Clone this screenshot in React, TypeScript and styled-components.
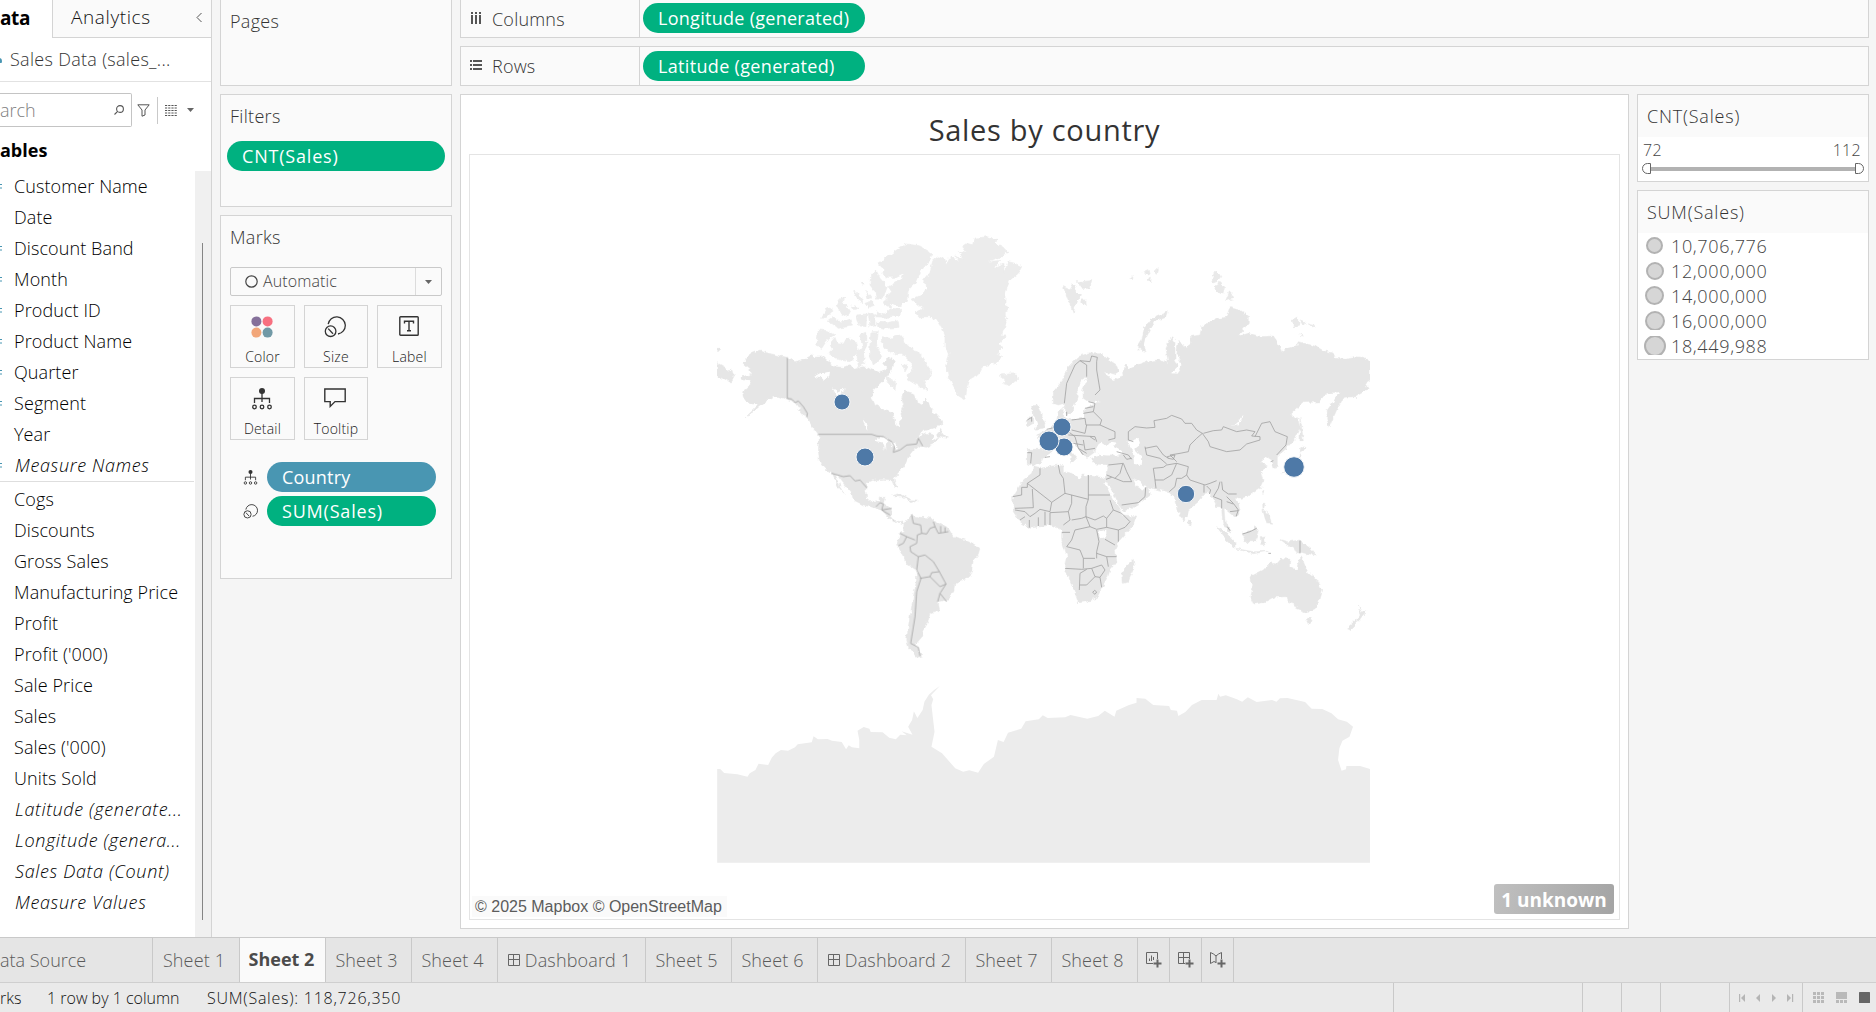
import React from "react";
import styled, { createGlobalStyle } from "styled-components";

const Global = createGlobalStyle`
  *, *::before, *::after { box-sizing: border-box; }
  body { margin: 0; overflow: hidden; background: #f5f5f5; }
`;

const Screen = styled.div`
  width: 1876px;
  height: 1012px;
  display: flex;
  flex-direction: column;
  overflow: hidden;
  background: #f5f5f5;
  color: #333;
  font-family: "Open Sans", "Noto Sans", sans-serif;
  font-size: 18px;
  font-weight: 350;
  line-height: 24px;
  white-space: nowrap;
`;

const Workspace = styled.div`
  display: flex;
  height: 937px;
`;

/* ---------- Data pane ---------- */

const DataPane = styled.aside`
  width: 212px;
  display: flex;
  flex-direction: column;
  background: #fff;
  border-right: 1px solid #d4d4d4;
`;

const PaneTabs = styled.div`
  display: flex;
  height: 38px;
`;

const PaneTabActive = styled.div`
  width: 52px;
  padding-top: 6px;
  font-size: 19px;
  font-weight: 700;
  color: #000;
  letter-spacing: -0.4px;
`;

const PaneTab = styled.div`
  flex: 1;
  display: flex;
  justify-content: space-between;
  padding: 5px 8px 0 18px;
  background: #fafafa;
  border-left: 1px solid #d4d4d4;
  border-bottom: 1px solid #d4d4d4;
  font-size: 19px;
  letter-spacing: 0.6px;
  color: #111;
`;

const SourceRow = styled.div`
  display: flex;
  align-items: center;
  gap: 7px;
  height: 44px;
  padding-bottom: 1px;
  border-bottom: 1px solid #e2e2e2;
  color: #333;
  letter-spacing: 0.3px;
`;

const SearchRow = styled.div`
  display: flex;
  align-items: center;
  height: 56px;
`;

const SearchBox = styled.div`
  display: flex;
  align-items: center;
  justify-content: space-between;
  width: 132px;
  height: 34px;
  padding-right: 7px;
  border: 1px solid #c4c4c4;
  border-left: 0;
  border-radius: 0 2px 2px 0;
  color: #808080;
`;

const SearchTools = styled.div`
  display: flex;
  align-items: center;
  padding-left: 5px;
`;

const ToolDivider = styled.span`
  width: 1px;
  height: 27px;
  margin: 0 7px;
  background: #c9c9c9;
`;

const ListToggle = styled.span`
  display: flex;
  align-items: center;
  gap: 10px;
`;

const TablesHeading = styled.div`
  height: 33px;
  color: #000;
  font-weight: 700;
`;

const FieldArea = styled.div`
  flex: 1;
  display: flex;
  justify-content: space-between;
`;

const FieldColumn = styled.div`
  width: 194px;
`;

const FieldGroup = styled.div<{ $divided?: boolean }>`
  border-top: ${(p) => (p.$divided ? "1px solid #dedede" : "0")};
  padding-top: ${(p) => (p.$divided ? "2px" : "0")};
`;

const FieldRow = styled.div<{ $italic?: boolean }>`
  display: flex;
  align-items: center;
  gap: ${(p) => (p.$italic ? 12 : 11)}px;
  height: 31px;
  padding-bottom: 2px;
  color: #000;
  font-style: ${(p) => (p.$italic ? "italic" : "normal")};
  letter-spacing: ${(p) => (p.$italic ? "0.65px" : "0.1px")};
`;

const ScrollGutter = styled.div`
  width: 16px;
  padding: 72px 0 17px 7px;
  background: #f0f0f0;
`;

const ScrollThumb = styled.div`
  width: 1px;
  height: 100%;
  background: #858585;
`;

/* ---------- Cards ---------- */

const CardColumn = styled.div`
  display: flex;
  flex-direction: column;
  gap: 8px;
  width: 232px;
  margin-left: 8px;
`;

const Card = styled.section<{ $h: number; $cut?: boolean }>`
  display: flex;
  flex-direction: column;
  height: ${(p) => p.$h}px;
  background: #fafafa;
  border: 1px solid #d4d4d4;
  border-top-width: ${(p) => (p.$cut ? 0 : 1)}px;
`;

const CardTitle = styled.div<{ $wide?: boolean }>`
  height: 42px;
  padding: 9px 0 0 9px;
  color: #333;
  letter-spacing: ${(p) => (p.$wide ? "0.8px" : "0.3px")};
`;

const Pill = styled.div<{ $w: number; $blue?: boolean; $ls?: number }>`
  width: ${(p) => p.$w}px;
  height: 30px;
  padding: 3px 15px;
  border-radius: 15px;
  background: ${(p) => (p.$blue ? "#4996b2" : "#00b180")};
  color: #fff;
  font-weight: 500;
  letter-spacing: ${(p) => p.$ls ?? 0.8}px;
`;

const FilterBody = styled.div`
  padding: 4px 6px;
`;

const MarkSelect = styled.div`
  display: flex;
  height: 29px;
  width: 212px;
  margin: 9px 0 9px 9px;
  border: 1px solid #c9c9c9;
  border-radius: 2px;
`;

const MarkValue = styled.div`
  flex: 1;
  display: flex;
  align-items: center;
  gap: 5px;
  padding: 0 0 1px 14px;
  font-size: 16px;
  letter-spacing: 0.1px;
  color: #444;
`;

const MarkArrow = styled.div`
  display: flex;
  align-items: center;
  justify-content: center;
  width: 26px;
  border-left: 1px solid #dcdcdc;
`;

const MarkGrid = styled.div`
  display: grid;
  grid-template-columns: 65px 64px 65px;
  gap: 9px;
  margin-left: 9px;
`;

const MarkButton = styled.div`
  display: flex;
  flex-direction: column;
  align-items: center;
  justify-content: space-between;
  height: 63px;
  padding: 10px 0 0;
  border: 1px solid #d4d4d4;
  font-size: 14px;
  line-height: 21px;
  letter-spacing: 0.2px;
  color: #222;

  svg {
    margin-right: 2px;
  }
`;

const EncodingList = styled.div`
  display: flex;
  flex-direction: column;
  gap: 4px;
  padding: 22px 0 0 22px;
`;

const Encoding = styled.div`
  display: flex;
  align-items: center;
  gap: 9px;
`;

/* ---------- Shelves and view ---------- */

const Center = styled.div`
  display: flex;
  flex-direction: column;
  gap: 8px;
  width: 1409px;
  margin-left: 8px;
`;

const Shelf = styled.div<{ $h: number; $cut?: boolean }>`
  display: flex;
  height: ${(p) => p.$h}px;
  background: #fafafa;
  border: 1px solid #d4d4d4;
  border-top-width: ${(p) => (p.$cut ? 0 : 1)}px;
`;

const ShelfName = styled.div<{ $top: number }>`
  display: flex;
  align-items: center;
  gap: 10px;
  width: 178px;
  height: 30px;
  margin-top: ${(p) => p.$top}px;
  padding-left: 9px;
  color: #333;
  letter-spacing: 0.2px;

  svg {
    margin-bottom: 2px;
  }
`;

const ShelfDrop = styled.div<{ $top: number }>`
  flex: 1;
  padding: ${(p) => p.$top}px 0 0 3px;
  border-left: 1px solid #d4d4d4;
`;

const ViewRow = styled.div`
  display: flex;
  gap: 8px;
`;

const View = styled.div`
  display: flex;
  flex-direction: column;
  width: 1169px;
  height: 835px;
  padding: 0 8px 8px;
  background: #fff;
  border: 1px solid #d4d4d4;
`;

const ViewTitle = styled.div`
  height: 59px;
  padding-top: 14px;
  text-align: center;
  font-size: 29px;
  line-height: 42px;
  font-weight: 400;
  letter-spacing: 0.7px;
  color: #333;
`;

const MapFrame = styled.div`
  position: relative;
  flex: 1;
  border: 1px solid #e4e4e4;
`;

const MapSvg = styled.svg`
  display: block;
`;

const Attribution = styled.div`
  position: absolute;
  left: 2px;
  bottom: 2px;
  padding: 0 5px 0 3px;
  background: #fafafa;
  color: #5c5c5c;
  font: 16px/21px "Liberation Sans", Arial, sans-serif;
`;

const UnknownBadge = styled.div`
  position: absolute;
  right: 5px;
  bottom: 5px;
  width: 120px;
  height: 30px;
  border-radius: 3px;
  background: linear-gradient(105deg, #c0c0c0, #a4a4a4);
  color: #fff;
  text-align: center;
  font-size: 19px;
  line-height: 32px;
  font-weight: 700;
`;

const Legends = styled.div`
  display: flex;
  flex-direction: column;
  gap: 8px;
  width: 232px;
`;

const LegendBody = styled.div`
  flex: 1;
  background: #fff;
`;

const RangeLabels = styled.div`
  display: flex;
  justify-content: space-between;
  padding: 1px 7px 0 5px;
  font-size: 16px;
  letter-spacing: 0.3px;
  color: #444;
`;

const RangeSlider = styled.div`
  display: flex;
  align-items: center;
  padding: 1px 4px 0;
`;

const RangeTrack = styled.span`
  flex: 1;
  height: 4px;
  background: #b2b2b2;
`;

const Handle = styled.span<{ $right?: boolean }>`
  width: 9px;
  height: 11px;
  border: 1px solid #666;
  border-radius: ${(p) => (p.$right ? "0 6px 6px 0" : "6px 0 0 6px")};
  background: #fff;
`;

const SizeRow = styled.div`
  display: flex;
  align-items: center;
  height: 25px;
  gap: 5px;
  padding-left: 5px;
  overflow: hidden;
  color: #444;
  letter-spacing: 0.65px;
`;

const SizeSlot = styled.span`
  display: flex;
  align-items: center;
  justify-content: center;
  width: 23px;
  height: 19px;
  overflow: hidden;
`;

const SizeDot = styled.span<{ $d: number }>`
  flex: none;
  width: ${(p) => p.$d}px;
  height: ${(p) => p.$d}px;
  border: 2px solid #b2b2b2;
  border-radius: 50%;
  background: #d6d6d6;
`;

/* ---------- Sheet tabs and status bar ---------- */

const TabBar = styled.nav`
  display: flex;
  height: 46px;
  background: #e5e5e5;
  border-top: 1px solid #c9c9c9;
  border-bottom: 1px solid #cfcfcf;
`;

const SheetTab = styled.div<{ $w: number; $active?: boolean; $start?: boolean; $icon?: boolean }>`
  display: flex;
  align-items: center;
  justify-content: ${(p) => (p.$start ? "flex-start" : "center")};
  gap: 5px;
  width: ${(p) => p.$w}px;
  padding-right: ${(p) => (p.$icon || p.$start ? 0 : p.$active ? 2 : 4)}px;
  padding-bottom: ${(p) => (p.$active ? 2 : 0)}px;
  border-right: 1px solid #c9c9c9;
  background: ${(p) => (p.$active ? "#fafafa" : "transparent")};
  color: ${(p) => (p.$active ? "#4b4b4b" : "#5a5a5a")};
  font-weight: ${(p) => (p.$active ? 700 : 350)};
  letter-spacing: ${(p) => (p.$active || p.$start ? 0 : 0.15)}px;
`;

const StatusBar = styled.footer`
  display: flex;
  justify-content: space-between;
  height: 29px;
  background: #eaeaea;
  color: #111;
  font-size: 16px;
  line-height: 30px;
`;

const StatusTexts = styled.div`
  display: flex;
`;

const StatusText = styled.span<{ $w: number; $ls?: number }>`
  width: ${(p) => p.$w}px;
  letter-spacing: ${(p) => p.$ls ?? 0}px;
`;

const StatusCells = styled.div`
  display: flex;
`;

const StatusCell = styled.div<{ $w: number }>`
  display: flex;
  align-items: center;
  width: ${(p) => p.$w}px;
  border-left: 1px solid #c9c9c9;
`;

/* ---------- Icons ---------- */

const HierarchyIcon = ({ size }: { size: number }) => (
  <svg width={size} height={size} viewBox="0 0 20 22" fill="none" stroke="#333" strokeWidth="1.3">
    <circle cx="10" cy="3" r="3" fill="#333" stroke="none" />
    <path d="M10 5v9M2.5 15v-4.5h15V15" />
    <circle cx="2.5" cy="19" r="1.8" />
    <circle cx="10" cy="19" r="1.8" />
    <circle cx="17.5" cy="19" r="1.8" />
  </svg>
);

const SizeIcon = ({ size }: { size: number }) => (
  <svg width={size} height={size} viewBox="0 0 22 22" fill="none" stroke="#333" strokeWidth="1.3">
    <path d="M4.2 8.2A8.6 8.6 0 1 1 14 18" />
    <circle cx="6.6" cy="15.2" r="5.3" />
    <path d="M4.2 12.6l4.8 5.2" />
  </svg>
);

const ColorIcon = () => (
  <svg width="22" height="22" viewBox="0 0 22 22">
    <circle cx="5.4" cy="5.4" r="5" fill="#85709a" />
    <circle cx="16.6" cy="5.4" r="5" fill="#f77080" />
    <circle cx="5.4" cy="16.6" r="5" fill="#f2a679" />
    <circle cx="16.6" cy="16.6" r="5" fill="#7199a6" />
  </svg>
);

const LabelIcon = () => (
  <svg width="20" height="20" viewBox="0 0 20 20" fill="none" stroke="#333" strokeWidth="1.4">
    <rect x="0.8" y="0.8" width="18.4" height="18.4" rx="0.8" />
    <path d="M5.5 7.5V5.3h9v2.2M10 5.3v9.4M8 14.7h4" />
  </svg>
);

const TooltipIcon = () => (
  <svg width="22" height="20" viewBox="0 0 22 20" fill="none" stroke="#333" strokeWidth="1.4">
    <path d="M0.8 1h20.4v12.6H11l-4.8 4.8v-4.8H0.8z" />
  </svg>
);

const Caret = () => (
  <svg width="7" height="4" viewBox="0 0 7 4">
    <path d="M0 0h7L3.5 4z" fill="#666" />
  </svg>
);

const DashboardIcon = () => (
  <svg width="12" height="12" viewBox="0 0 12 12" fill="none" stroke="#666" strokeWidth="1">
    <path d="M0.5 0.5h11v11h-11zM5.5 0.5v11M0.5 5.5h11" />
  </svg>
);

const NewTabIcon = ({ kind }: { kind: "sheet" | "dash" | "story" }) => (
  <svg width="16" height="16" viewBox="0 0 16 16" fill="none" stroke="#666">
    {kind === "sheet" && <path d="M7 11.5H.5V.5h11V7M3.5 9V6.5M5.5 9V3.5M7.5 8V5" />}
    {kind === "dash" && <path d="M7 11.5H.5V.5h11V7M5.5.5v11M.5 5.5h11" />}
    {kind === "story" && <path d="M6 10.5l-2-1-3.500 2V.5l3 1.500 2.500 2 2.500-2 3-1.500V7M6 3.500V11" />}
    <path d="M11.500 7.500v8M7.500 11.500h8" strokeWidth="2" />
  </svg>
);

/* ---------- Map ---------- */

const landWest = [
  "M120 472L150 465 155 455 128 432 140 415 150 402 180 390 200 398 240 408 262 412 285 425 310 418 335 404 345 412 370 410 385 425 405 440 430 442 455 432 460 445 490 440 520 450 540 460 560 445 548 430 560 418 575 412 583 425 578 445 560 470 545 485 520 510 515 530 525 555 550 570 580 580 585 610 595 622 605 600 603 580 612 555 605 535 612 512 640 520 650 545 665 555 680 535 690 560 700 575 725 600 725 615 700 625 670 632 650 655 680 640 700 645 690 665 720 650 700 672 680 682 665 680 655 678 640 690 625 710 615 735 600 755 582 775 585 790 592 802 582 798 575 780 550 778 520 780 500 790 497 810 500 835 515 847 535 845 540 832 555 832 550 850 572 865 575 875 572 890 580 900 600 905 612 902 610 912 585 902 565 892 550 875 530 865 515 860 490 855 460 840 455 820 430 790 415 770 405 762 425 810 432 820 415 800 398 762 375 745 358 720 355 690 358 650 340 625 322 595 300 570 285 548 262 538 240 530 220 528 205 538 190 550 160 575 135 593 165 565 175 550 150 548 130 535 128 515 150 495 155 483 130 480z",
  "M51 428L75 442 103 462 90 486 70 475 51 470zM51 385h10v6h-10z",
  "M712 650L722 628 728 642 742 655z",
  "M575 827L600 821 632 838 628 842 600 828zM622 842L655 843 645 850z",
  "M612 910L635 885 660 892 690 893 720 912 745 925 760 950 790 958 815 968 840 985 835 1002 820 1020 815 1050 805 1075 785 1080 765 1090 762 1110 745 1140 715 1145 718 1170 690 1180 685 1200 668 1230 665 1252 645 1275 668 1308 650 1312 628 1285 620 1260 625 1220 640 1130 650 1080 648 1050 620 1030 600 990 590 975 600 940 610 935z",
];

const landArctic = [
  "M636 238L665 225 680 205 678 190 668 182 690 155 700 120 715 110 735 118 738 135 750 115 755 108 775 128 765 105 790 118 778 95 800 100 785 80 800 70 820 75 825 55 860 50 890 58 885 68 910 82 920 95 905 110 860 125 900 122 880 145 912 130 912 160 925 125 945 130 965 140 955 160 930 180 922 200 915 225 915 255 928 262 915 285 922 300 905 345 918 345 895 375 912 378 890 400 908 410 890 430 850 438 840 460 810 475 800 510 795 538 775 525 760 500 745 470 740 440 748 400 735 380 735 345 725 325 710 300 685 290 655 290 645 275 670 268z",
  "M533 130L570 105 590 90 620 72 660 78 695 100 690 120 665 150 650 185 625 210 620 240 600 260 575 250 555 235 575 215 565 200 605 178 612 158 585 172 562 172 545 160 555 150z",
  "M512 165L528 150 540 175 562 200 550 232 530 238 525 215 510 195z",
  "M530 275L545 285 575 265 602 268 600 288 560 292 525 290zM530 307L560 308 595 302 597 322 555 325 530 318z",
  "M458 210L485 230 488 248 475 240zM420 235l15-3-5 12zM500 215l12 15-8 10zM495 250l20-6 8 15-18 6zM555 240l20 5-5 20-20-10zM420 235L440 260 425 275 410 262zM455 255L478 262 465 270zM487 188l6 2-3 6z",
  "M380 268L395 262 398 272 380 292 365 295 375 275zM400 300L425 305 450 298 455 318 415 325 395 310zM430 262L450 270 440 290 422 280zM470 285L500 282 498 320 480 318zM505 278L525 285 525 318 510 320zM385 300L400 290 412 300 392 308z",
  "M355 330L385 332 405 345 380 362 365 385 350 378z",
  "M405 352L412 372 430 372 440 355 470 365 475 390 465 408 450 425 415 418 385 400 400 385 392 368z",
  "M480 345L500 337 500 380 490 400 495 430 475 440 470 400 488 380zM513 335L535 335 530 375 548 410 520 435 508 400z",
  "M550 350L570 355 600 345 615 365 640 390 665 405 680 430 692 455 685 480 670 480 680 510 650 495 625 480 620 465 640 450 630 425 605 400 580 402 555 385 545 370z",
  "M560 470L590 485 585 510 565 490zM605 430l18 8-8 15z",
  "M898 466L925 462 950 462 956 478 930 498 908 490 915 478z",
];

const landEast = [
  "M160 190L160 155 185 125 205 80 235 50 270 38 300 38 320 55 350 75 355 95 340 105 315 95 330 115 340 120 355 115 370 95 375 75 385 85 410 75 430 68 470 60 480 58 505 72 498 25 515 -10 525 5 525 60 535 80 515 100 530 102 548 75 530 40 535 5 560 20 575 10 570 -10 600 -15 605 -40 640 -60 680 -70 690 -100 710 -95 745 -70 745 -50 712 -10 745 -20 785 -10 820 -12 832 5 845 35 860 25 890 20 898 5 950 20 970 32 1000 40 1005 52 1040 55 1060 50 1090 52 1110 65 1110 120 1095 130 1105 148 1065 170 1030 172 1025 180 1010 210 988 260 980 240 982 210 1000 185 1020 155 980 160 960 185 910 188 870 225 895 240 900 265 885 295 860 325 832 348 832 382 822 385 815 360 800 350 780 368 800 375 785 395 792 420 780 445 750 465 725 475 705 470 715 490 722 515 705 532 690 520 672 505 675 540 695 580 685 575 668 550 665 500 650 500 640 480 630 460 605 465 595 485 565 510 562 530 550 543 535 515 528 480 515 465 505 455 465 447 440 440 410 420 395 415 410 440 430 450 440 435 452 465 425 485 370 515 360 505 340 460 318 420 322 395 325 375 285 372 275 355 300 345 285 335 280 340 262 352 250 345 235 330 225 310 210 305 215 335 230 355 215 370 215 350 190 325 165 325 150 340 125 355 120 372 100 378 82 372 82 328 125 328 125 305 110 285 150 268 170 245 175 215 190 205 188 232 215 240 250 230 255 205 300 185 265 185 250 175 248 150 262 120 250 115 228 155 232 170 215 215 200 228 193 190 175 195z",
  "M98 198L112 195 120 215 135 250 130 265 102 268 115 245 100 225zM78 240L98 228 98 255 80 260z",
  "M100 380L120 385 175 375 190 378 190 395 215 400 240 418 250 405 300 412 318 420 312 428 340 480 370 525 410 528 400 555 355 605 345 625 350 665 330 690 322 715 305 745 290 775 260 785 235 788 220 745 195 685 202 650 185 600 185 570 150 555 120 560 90 565 60 545 40 515 38 470 70 420 95 400z",
  "M400 658L403 680 385 725 370 730 368 705 375 680zM565 540L575 545 572 555 563 550z",
  "M650 560L680 580 705 610 705 622 680 600zM705 625L760 635 805 634 760 641zM725 580L750 572 765 560 775 575 765 605 735 605zM780 590L800 588 790 600 795 615 783 612z",
  "M788 490L795 490 790 510 805 520 815 550 800 548 790 520zM840 598L865 605 900 600 930 625 948 645 915 640 895 635 870 620zM787 450l5 2-3 12z",
  "M900 235L905 260 910 305 900 305zM903 318L920 325 900 334zM903 338L903 362 870 395 845 402 865 388 890 368z",
  "M750 715L755 708 790 690 810 668 830 672 845 655 870 658 868 678 890 690 900 650 910 665 925 700 955 725 965 750 955 785 940 812 915 815 890 805 880 790 865 785 860 770 820 772 790 788 762 792 752 770 758 745z",
  "M918 835L937 835 932 850 925 850zM1075 795L1085 815 1100 815 1080 840 1072 838 1082 820zM1070 838L1075 845 1050 870 1040 865z",
  "M505 -85L500 -70 465 -57 450 -33 435 -3 430 15 442 37 418 27 413 15 426 -5 433 -35 453 -62z",
];

const landSvalbard =
  "M70 200L90 210 100 192 108 210 125 228 110 240 100 278 85 240zM112 185L155 182 150 205 125 205zM125 240h12l2 18zM520 165L530 150 542 170 530 185 515 190zM525 195L540 185 553 205 548 222 530 212zM560 235L570 212 582 235 557 242zM757 300L770 292 780 315 760 320zM780 300L795 305 790 318zM805 312l22 5-5 4zM265 175l12-8 2 8zM310 155l14-6 4 16-12-2zM345 150l10-4-3 14zM320 180l14-8-2 12zM780 340l10 8-8-1z";

const landAntarctica =
  "M39 327L46 327 55 339 85 343 108 350 113 340 126 330 133 311 155 315 163 293 172 280 184 270 200 272 216 262 222 253 254 247 258 229 268 238 290 237 300 242 322 246 332 268 338 256 345 262 362 265 362 240 358 212 372 201 385 206 388 216 415 217 430 233 445 238 455 224 470 226 458 214 483 224 473 200 482 180 486 154 494 174 506 150 510 125 520 104 532 90 545 78 525 106 530 118 526 135 529 170 533 215 526 260 550 280 570 310 580 325 598 335 612 331 632 338 645 312 668 290 677 240 690 246 700 218 730 206 740 184 770 178 779 166 790 174 830 172 842 165 880 176 905 168 920 152 942 170 946 152 975 135 992 128 992 114 1012 116 1030 135 1066 138 1070 150 1084 152 1087 168 1103 156 1118 135 1140 120 1174 120 1178 101 1182 110 1195 106 1220 118 1232 125 1245 112 1265 126 1300 120 1310 125 1318 115 1335 114 1375 126 1390 146 1414 147 1435 160 1450 178 1470 185 1484 200 1476 230 1460 242 1453 265 1450 300 1458 332 1468 328 1469 318 1500 318 1523 327V608H39z";

const water = [
  "M283 335L300 305 318 318 330 305 350 308 340 320 375 340 340 347 300 345z",
  "M385 305L415 295 420 310 400 325 425 350 422 375 402 372 400 345z",
  "M695 262L712 248 728 224 722 248z",
  "M297 575l22-6v22l-20 4z",
];

const bordersWest =
  "M262 412V535L275 537 285 548 295 543 310 560 322 580 320 592M355 643H515L530 648 550 650 575 665 583 680 580 697 600 690 620 675 650 672 655 655 668 678M395 760L430 770 450 767 465 783 480 780 500 803M528 860L540 848 550 852 545 870 575 865M545 870L570 885M578 900l4 4M635 885L640 910 662 915 665 940 652 945 650 970 630 980 632 995 655 1010 650 1050 663 1075 650 1115 645 1190 632 1270 655 1282 660 1308M665 940L680 942 690 925 705 920 700 905M705 920L715 940 745 935M722 918v20M735 922v16M600 940L620 950 645 960M620 950L610 970 595 977M655 1010L675 1005 700 1025 718 1055 695 1058 690 1070 660 1075M690 1070L720 1100 738 1092 718 1055M738 1092L720 1120 713 1145M720 1120L740 1145";

const bordersEast =
  "M120 385V405L82 430M82 430L155 487 195 460 265 478M82 430V442H65V465L38 470M97 447L100 503 45 505M175 375L180 400 190 415 195 460M265 405V465H330M265 478V465M155 487L150 515 120 508 105 520 90 530 75 515 45 510M215 465V490L205 515 150 518V555M205 515L210 540 190 555M215 540L245 535 258 530V500L265 478M258 530L270 560 225 570M270 560L290 568 320 562V535L340 510 330 480M258 530L285 540 310 528 320 535M340 510L365 520 390 545 375 562 355 570 320 562M355 570V605M315 598L345 615M290 570L297 605 290 635 290 655M225 570L215 600 200 620 240 630 250 655 285 655M185 577H210M195 685L245 688 275 685 305 675M250 655V685M238 750L240 700 260 688M240 735L260 735 285 710 300 712M275 685L285 710M305 675L315 690 300 712 305 742M290 640L320 650 350 650M320 650L325 680M135 515V555M115 532V558M88 540V563M60 540L75 530M278 757l6-6 6 5-5 7zM325 375L370 370 380 395 395 425M320 405L345 415 360 400 368 372M345 415L370 425 395 425M318 418L335 412M365 495L415 488 435 470 437 442M350 335L385 345 395 358M370 345L380 358 395 355M385 275L405 260 440 264 465 262 462 242 500 235 515 226 545 237 555 250 575 250 590 270 607 280M385 275V300L400 305M607 280L590 295 570 315 565 335 540 340 510 345M435 325L470 318 490 345 505 355M435 320L440 345 480 355 500 372M607 280L625 305 630 320 680 335 720 330 740 312 780 300 780 290 755 288 765 275 740 270 710 275 670 260 665 270 640 272 610 280M765 290L785 250 810 245 825 275 862 290 858 315 830 345M460 385L465 420 468 445M460 385L490 382 500 375 530 370M530 370L515 405 490 420 465 420M530 370L565 380 560 405 545 415 530 415 525 440 508 455M560 405L570 420 615 435 630 430 650 422M612 435V458M620 438L632 450 628 462M660 425L655 445 640 470 665 480V505M665 425L668 450 685 462 710 462M680 470L700 490 715 510 708 530M680 485L700 492M690 515L715 512M502 350L525 345 520 358 505 355zM510 345L530 365M193 190L200 130 225 75 240 62 260 75V110M240 62L270 65 275 48 292 52 290 65V90L300 150 285 165M265 185L285 190 280 215 250 220M255 205L280 200M280 215L305 240 300 255 258 255 255 235M215 240L255 235M300 255L345 275 345 295 325 300M215 270L255 280 260 255M205 285L285 290 290 305M225 290L235 325 250 345M250 300L255 330 285 325M220 310L250 315M205 275L225 290M235 325L260 340M270 290L285 300M140 268L165 262M82 338H95L92 370M135 352L150 350M82 240L95 232 95 245M900 602V640M728 582L750 575 770 565M805 640H813M682 560L690 572M200 215V228M812 365L820 362";

const marks: [number, number, number][] = [
  [842, 402, 8],
  [865, 457, 9],
  [1062, 427, 9],
  [1064, 447, 9],
  [1049, 441, 10],
  [1186, 494, 8.7],
  [1294, 467, 10.3],
];

const WorldMap = () => (
  <MapSvg width="1149" height="764" viewBox="470 155 1149 764">
    <defs>
      <filter id="coast" x="-2%" y="-2%" width="104%" height="104%">
        <feTurbulence type="fractalNoise" baseFrequency="0.2" numOctaves="3" seed="4" result="n" />
        <feDisplacementMap in="SourceGraphic" in2="n" scale="5" xChannelSelector="R" yChannelSelector="G" />
      </filter>
      <clipPath id="world">
        <rect x="717" y="155" width="653" height="708" />
      </clipPath>
    </defs>
    <g clipPath="url(#world)">
      <g filter="url(#coast)">
        <g transform="translate(700 220) scale(.33333)">
          <g fill="#ececec" stroke="#ececec" strokeWidth="2">
            {landArctic.map((d) => <path key={d} d={d} />)}
          </g>
          <g fill="#e6e6e6" stroke="#e6e6e6" strokeWidth="1.500">
            {landWest.map((d) => <path key={d} d={d} />)}
          </g>
          <path
            fill="#fff"
            d="M345 468L360 460 390 455 388 468 370 482 360 472zM398 505L415 515 435 505 425 520 410 528zM488 598L500 612 506 632 496 622zM525 662L545 648 568 655 555 668 556 695 550 668zM568 665L585 668 596 688 580 682z"
          />
        </g>
        <g transform="translate(1000 340) scale(.33333)">
          <g fill="#e6e6e6" stroke="#e6e6e6" strokeWidth="1.500">
            {landEast.map((d) => <path key={d} d={d} />)}
          </g>
          <g fill="#fff">{water.map((d) => <path key={d} d={d} />)}</g>
        </g>
        <path transform="translate(1040 220) scale(.33333)" fill="#e9e9e9" stroke="#e9e9e9" strokeWidth="2" d={landSvalbard} />
      </g>
      <path transform="translate(700 660) scale(.44004 .33333)" fill="#ececec" d={landAntarctica} />
      <g fill="none" stroke="#9d9d9d" strokeWidth="2.300" strokeLinejoin="round">
        <path transform="translate(700 220) scale(.33333)" d={bordersWest} />
        <path transform="translate(1000 340) scale(.33333)" d={bordersEast} />
      </g>
    </g>
    {marks.map(([x, y, r]) => (
      <circle key={`${x}-${y}`} cx={x} cy={y} r={r} fill="#4e79a7" stroke="#f4f6f8" strokeWidth="1" />
    ))}
  </MapSvg>
);

/* ---------- Data ---------- */

type Field = { name: string; text?: boolean; italic?: boolean };

const dimensions: Field[] = [
  { name: "Customer Name", text: true },
  { name: "Date" },
  { name: "Discount Band", text: true },
  { name: "Month", text: true },
  { name: "Product ID", text: true },
  { name: "Product Name", text: true },
  { name: "Quarter", text: true },
  { name: "Segment", text: true },
  { name: "Year" },
  { name: "Measure Names", text: true, italic: true },
];

const measures: Field[] = [
  { name: "Cogs" },
  { name: "Discounts" },
  { name: "Gross Sales" },
  { name: "Manufacturing Price" },
  { name: "Profit" },
  { name: "Profit ('000)" },
  { name: "Sale Price" },
  { name: "Sales" },
  { name: "Sales ('000)" },
  { name: "Units Sold" },
  { name: "Latitude (generate...", italic: true },
  { name: "Longitude (genera...", italic: true },
  { name: "Sales Data (Count)", italic: true },
  { name: "Measure Values", italic: true },
];

const sizes: [string, number][] = [
  ["10,706,776", 17],
  ["12,000,000", 18],
  ["14,000,000", 19],
  ["16,000,000", 20],
  ["18,449,988", 22],
];

const FieldItem = ({ field }: { field: Field }) => (
  <FieldRow $italic={field.italic}>
    <svg width="3" height="6" viewBox="0 0 3 6" fill="none" stroke="#4996b2">
      {field.text && <path d="M0 1.500h2M0 5h2" />}
    </svg>
    {field.name}
  </FieldRow>
);

export default function App() {
  return (
    <Screen>
      <Global />
      <Workspace>
        <DataPane>
          <PaneTabs>
            <PaneTabActive>ata</PaneTabActive>
            <PaneTab>
              Analytics
              <svg width="7" height="23" viewBox="0 0 7 23" fill="none" stroke="#555">
                <path d="M5.500 8L1 12.500 5.500 17" />
              </svg>
            </PaneTab>
          </PaneTabs>
          <SourceRow>
            <svg width="3" height="8" viewBox="0 0 3 8">
              <circle cx="-1" cy="6" r="3" fill="#4996b2" />
            </svg>
            Sales Data (sales_...
          </SourceRow>
          <SearchRow>
            <SearchBox>
              arch
              <svg width="10" height="10" viewBox="0 0 10 10" fill="none" stroke="#555" strokeWidth="1.100">
                <circle cx="6" cy="4" r="3.400" />
                <path d="M3.600 6.400L.5 9.500" />
              </svg>
            </SearchBox>
            <SearchTools>
              <svg width="13" height="13" viewBox="0 0 13 13" fill="none" stroke="#555">
                <path d="M.8.8h11.400L8 6v5l-3 1.200V6z" />
              </svg>
              <ToolDivider />
              <ListToggle>
                <svg width="12" height="11" viewBox="0 0 12 11" stroke="#555" strokeDasharray="2.200 1">
                  <path d="M0 .5h12M0 3h12M0 5.500h12M0 8h12M0 10.500h12" />
                </svg>
                <Caret />
              </ListToggle>
            </SearchTools>
          </SearchRow>
          <TablesHeading>ables</TablesHeading>
          <FieldArea>
            <FieldColumn>
              <FieldGroup>
                {dimensions.map((f) => (
                  <FieldItem key={f.name} field={f} />
                ))}
              </FieldGroup>
              <FieldGroup $divided>
                {measures.map((f) => (
                  <FieldItem key={f.name} field={f} />
                ))}
              </FieldGroup>
            </FieldColumn>
            <ScrollGutter>
              <ScrollThumb />
            </ScrollGutter>
          </FieldArea>
        </DataPane>

        <CardColumn>
          <Card $h={86} $cut>
            <CardTitle>Pages</CardTitle>
          </Card>
          <Card $h={113}>
            <CardTitle>Filters</CardTitle>
            <FilterBody>
              <Pill $w={218}>CNT(Sales)</Pill>
            </FilterBody>
          </Card>
          <Card $h={364}>
            <CardTitle>Marks</CardTitle>
            <MarkSelect>
              <MarkValue>
                <svg width="13" height="13" viewBox="0 0 13 13" fill="none" stroke="#444" strokeWidth="1.200">
                  <circle cx="6.500" cy="6.500" r="5.700" />
                </svg>
                Automatic
              </MarkValue>
              <MarkArrow>
                <Caret />
              </MarkArrow>
            </MarkSelect>
            <MarkGrid>
              <MarkButton><ColorIcon />Color</MarkButton>
              <MarkButton><SizeIcon size={22} />Size</MarkButton>
              <MarkButton><LabelIcon />Label</MarkButton>
              <MarkButton><HierarchyIcon size={22} />Detail</MarkButton>
              <MarkButton><TooltipIcon />Tooltip</MarkButton>
            </MarkGrid>
            <EncodingList>
              <Encoding>
                <HierarchyIcon size={15} />
                <Pill $w={169} $blue $ls={0.2}>Country</Pill>
              </Encoding>
              <Encoding>
                <SizeIcon size={15} />
                <Pill $w={169}>SUM(Sales)</Pill>
              </Encoding>
            </EncodingList>
          </Card>
        </CardColumn>

        <Center>
          <Shelf $h={38} $cut>
            <ShelfName $top={4}>
              <svg width="12" height="12" viewBox="0 0 12 12" stroke="#555" strokeWidth="2">
                <path d="M2 0v2M2 3v9M6 0v2M6 3v9M10 0v2M10 3v9" />
              </svg>
              Columns
            </ShelfName>
            <ShelfDrop $top={3}>
              <Pill $w={222} $ls={0.28}>Longitude (generated)</Pill>
            </ShelfDrop>
          </Shelf>
          <Shelf $h={40}>
            <ShelfName $top={4}>
              <svg width="12" height="10" viewBox="0 0 12 10" stroke="#555" strokeWidth="2">
                <path d="M0 1h2M3 1h9M0 5h2M3 5h9M0 9h2M3 9h9" />
              </svg>
              Rows
            </ShelfName>
            <ShelfDrop $top={4}>
              <Pill $w={222} $ls={0.33}>Latitude (generated)</Pill>
            </ShelfDrop>
          </Shelf>
          <ViewRow>
            <View>
              <ViewTitle>Sales by country</ViewTitle>
              <MapFrame>
                <WorldMap />
                <Attribution>© 2025 Mapbox © OpenStreetMap</Attribution>
                <UnknownBadge>1 unknown</UnknownBadge>
              </MapFrame>
            </View>
            <Legends>
              <Card $h={88}>
                <CardTitle $wide>CNT(Sales)</CardTitle>
                <LegendBody>
                  <RangeLabels>
                    <span>72</span>
                    <span>112</span>
                  </RangeLabels>
                  <RangeSlider>
                    <Handle />
                    <RangeTrack />
                    <Handle $right />
                  </RangeSlider>
                </LegendBody>
              </Card>
              <Card $h={170}>
                <CardTitle $wide>SUM(Sales)</CardTitle>
                <LegendBody>
                  {sizes.map(([label, d]) => (
                    <SizeRow key={label}>
                      <SizeSlot>
                        <SizeDot $d={d} />
                      </SizeSlot>
                      {label}
                    </SizeRow>
                  ))}
                </LegendBody>
              </Card>
            </Legends>
          </ViewRow>
        </Center>
      </Workspace>

      <TabBar>
        <SheetTab $w={153} $start>ata Source</SheetTab>
        <SheetTab $w={87}>Sheet 1</SheetTab>
        <SheetTab $w={86} $active>Sheet 2</SheetTab>
        <SheetTab $w={86}>Sheet 3</SheetTab>
        <SheetTab $w={86}>Sheet 4</SheetTab>
        <SheetTab $w={148}><DashboardIcon />Dashboard 1</SheetTab>
        <SheetTab $w={86}>Sheet 5</SheetTab>
        <SheetTab $w={86}>Sheet 6</SheetTab>
        <SheetTab $w={148}><DashboardIcon />Dashboard 2</SheetTab>
        <SheetTab $w={86}>Sheet 7</SheetTab>
        <SheetTab $w={86}>Sheet 8</SheetTab>
        <SheetTab $w={32} $icon><NewTabIcon kind="sheet" /></SheetTab>
        <SheetTab $w={32} $icon><NewTabIcon kind="dash" /></SheetTab>
        <SheetTab $w={32} $icon><NewTabIcon kind="story" /></SheetTab>
      </TabBar>

      <StatusBar>
        <StatusTexts>
          <StatusText $w={47}>rks</StatusText>
          <StatusText $w={160}>1 row by 1 column</StatusText>
          <StatusText $w={210} $ls={0.75}>SUM(Sales): 118,726,350</StatusText>
        </StatusTexts>
        <StatusCells>
          <StatusCell $w={189} />
          <StatusCell $w={39} />
          <StatusCell $w={39} />
          <StatusCell $w={69} />
          <StatusCell $w={73}>
            <svg width="72" height="10" viewBox="0 0 72 10" fill="#b5b5b5">
              <path d="M9 1h1.200v8H9zM15 1v8l-4-4zM30 1v8l-4-4zM42 1v8l4-4zM57 1v8l4-4zM62 1h1.200v8H62z" />
            </svg>
          </StatusCell>
          <StatusCell $w={74}>
            <svg width="73" height="12" viewBox="0 0 73 12" fill="#b9b9b9">
              <path d="M10 0h3v3h-3zM14 0h3v3h-3zM18 0h3v3h-3zM10 4h3v3h-3zM14 4h3v3h-3zM18 4h3v3h-3zM10 8h3v3h-3zM14 8h3v3h-3zM18 8h3v3h-3zM33 0h11v7H33zM33 8h3v3h-3zM37 8h3v3h-3zM41 8h3v3h-3z" />
              <rect x="56" y="0" width="11" height="11" rx="0.500" fill="#666" />
            </svg>
          </StatusCell>
        </StatusCells>
      </StatusBar>
    </Screen>
  );
}
